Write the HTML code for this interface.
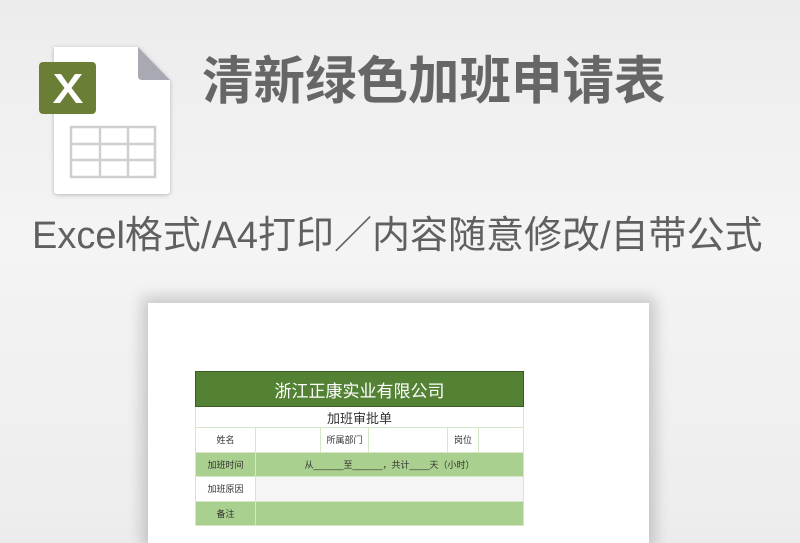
<!DOCTYPE html>
<html><head><meta charset="utf-8"><style>
*{margin:0;padding:0;box-sizing:border-box}
body{width:800px;height:526px;overflow:hidden;position:relative;background:linear-gradient(180deg,#ececec 0%,#f4f4f4 45%,#ededed 100%);font-family:"Liberation Sans","Noto Sans CJK SC",sans-serif}
.t{position:absolute;white-space:nowrap;color:#666}
.paper{position:absolute;left:148px;top:303px;width:501px;height:240px;background:#fff;box-shadow:0 0 14px 6px rgba(0,0,0,.18)}
table{position:absolute;left:195px;top:371px;width:328px;border-collapse:collapse;table-layout:fixed;font-size:9px;color:#333}
td{border:1px solid #d6e6c8;text-align:center;height:24.5px;padding:0}
.h td{background:#548235;color:#fff;font-size:17px;height:35px;border:1px solid #3a5a20}
.s td{background:#fff;font-size:13px;height:21px}
.g td{background:#a9d08e}
.w td{background:#fff}
.w2 td{background:#f5f5f5}
</style></head><body>
<svg style="position:absolute;left:30px;top:40px" width="150" height="160" viewBox="0 0 150 160">
<defs><filter id="f" x="-20%" y="-20%" width="140%" height="140%"><feDropShadow dx="0" dy="1" stdDeviation="2" flood-opacity=".25"/></filter></defs>
<path d="M24 7 H108 L140 40 V150 Q140 154 136 154 H28 Q24 154 24 150 Z" fill="#fff" filter="url(#f)"/>
<path d="M108 7 L140 40 H112 Q108 40 108 36 Z" fill="#a9a9b3"/>
<rect x="9" y="22" width="57" height="52" rx="4" fill="#6a7f35"/>
<path d="M24 34 L31 34 L38 44 L45 34 L52 34 L41.5 48 L53 63 L46 63 L38 52 L30 63 L23 63 L34.5 48 Z" fill="#fff"/>
<g fill="none" stroke="#cfcfcf" stroke-width="2.5"><rect x="41" y="87" width="84" height="50"/><path d="M41 104H125M41 120H125M70 87V137M98 87V137"/></g>
</svg>
<div class="t" style="left:202px;top:50px;font-size:51.5px;font-weight:bold;line-height:62px;color:#666">清新绿色加班申请表</div>
<div class="t" style="left:32px;top:213px;font-size:38px;line-height:46px;color:#606060">Excel格式/A4打印／内容随意修改/自带公式</div>
<div class="paper"></div>
<table>
<colgroup><col style="width:60px"><col style="width:65px"><col style="width:48px"><col style="width:79px"><col style="width:31px"><col style="width:45px"></colgroup>
<tr class="h"><td colspan="6">浙江正康实业有限公司</td></tr>
<tr class="s"><td colspan="6">加班审批单</td></tr>
<tr class="w"><td>姓名</td><td></td><td>所属部门</td><td></td><td>岗位</td><td></td></tr>
<tr class="g"><td>加班时间</td><td colspan="5">从______至______，共计____天（小时）</td></tr>
<tr class="w2"><td style="background:#fff">加班原因</td><td colspan="5"></td></tr>
<tr class="g"><td>备注</td><td colspan="5"></td></tr>
</table>
</body></html>
